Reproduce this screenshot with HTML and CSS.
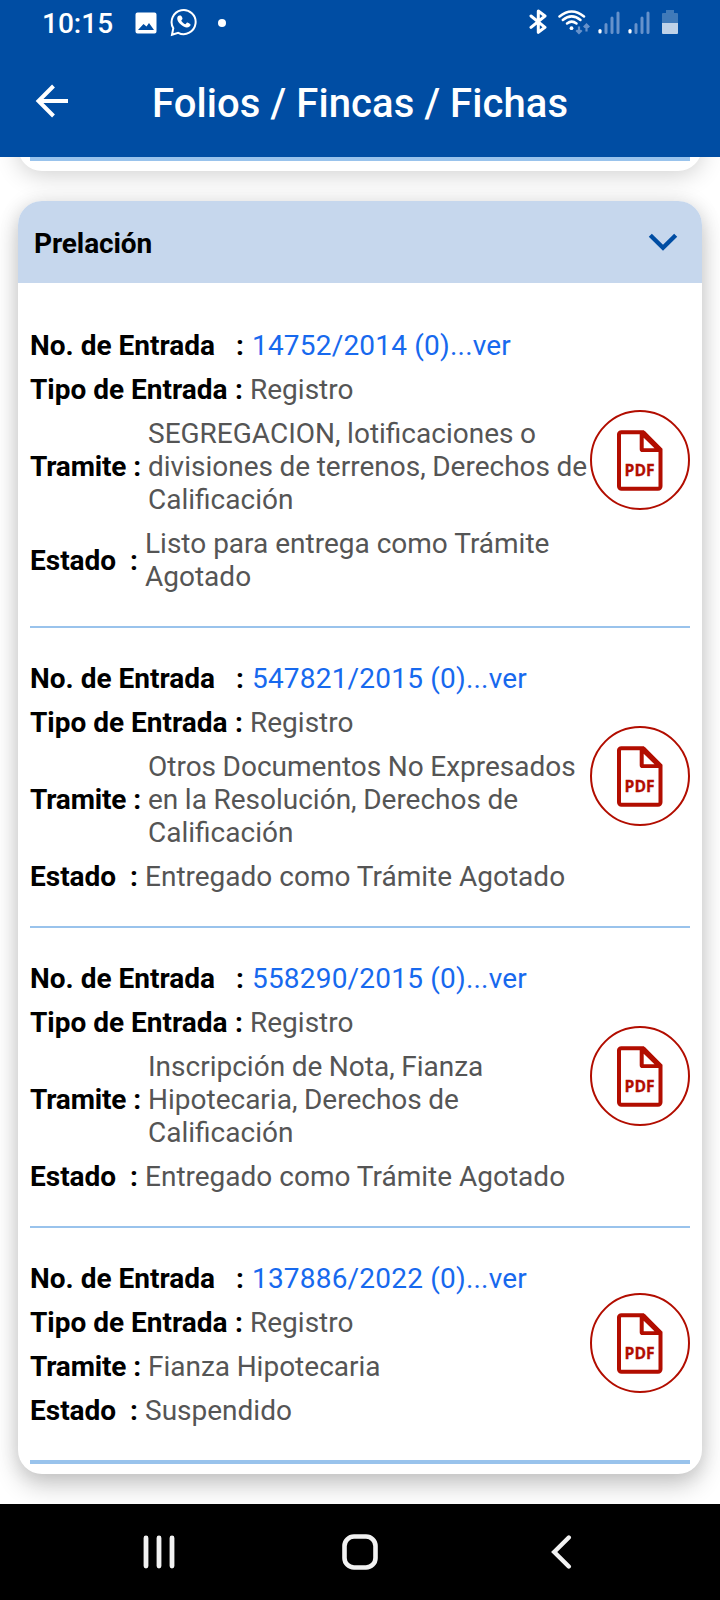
FILE: index.html
```html
<!DOCTYPE html>
<html lang="es">
<head>
<meta charset="utf-8">
<title>Folios / Fincas / Fichas</title>
<link rel="stylesheet" href="styles.css">
</head>
<body>
<svg class="defs" width="0" height="0">
  <symbol id="pdf" viewBox="0 -0.7 46 62">
    <path d="M4.500 2.500H26L43.500 19.800V56.500a2.500 2.500 0 0 1-2.500 2.500H4.500A2.500 2.500 0 0 1 2 56.500V4.500A2.500 2.500 0 0 1 4.500 2.500Z" fill="none" stroke="#b20d00" stroke-width="4"/>
    <path d="M22.700 2V19.500a2.800 2.800 0 0 0 2.800 2.800H44V18L28 1.500ZM26.700 8L37.500 18.600H26.700Z" fill="#b20d00" fill-rule="evenodd"/>
    <text class="pdf-text" x="7.600" y="46.200" textLength="30" lengthAdjust="spacingAndGlyphs">PDF</text>
  </symbol>
  <symbol id="signal" viewBox="0 0 22 24">
    <path d="M8 22.500V14.500M14 22.500V8M20 22.500V3" stroke="#6692cb" stroke-width="3" stroke-linecap="round"/>
    <path d="M2 22V20.500" stroke="#fff" stroke-width="3.200" stroke-linecap="round"/>
  </symbol>
</svg>
<div class="screen">
  <header class="top">
    <div class="status">
      <span class="clock">10:15</span>
      <svg class="i-photo" width="22" height="22" viewBox="0 0 22 22"><path fill="#fff" fill-rule="evenodd" d="M2.500 .5h17a2 2 0 0 1 2 2v17a2 2 0 0 1-2 2h-17a2 2 0 0 1-2-2v-17a2 2 0 0 1 2-2ZM3 18H19L14 11L11.500 14.500L8.500 12Z"/></svg>
      <svg class="i-chat" width="28" height="29" viewBox="0 0 28 29"><path d="M2 26.800L3.300 20.200A12 12 0 1 1 8.200 24.800Z" fill="none" stroke="#fff" stroke-width="2"/><path d="M9.300 7.600c-.8 0-2.100 1.300-2.100 3 0 3.700 5.700 8.900 9.700 8.900 2 0 3.700-1.300 3.700-2.900 0-.7-2.800-2.200-3.400-2.200-.7 0-1.300 1.800-2 1.800-.9 0-3.900-2.700-3.900-3.600 0-.5 1.200-1.200 1.200-1.900 0-.6-1.100-3.100-1.700-3.100Z" fill="#fff"/></svg>
      <span class="dot"></span>
      <div class="sys">
        <svg width="18" height="25" viewBox="0 0 18 25"><path d="M2 7L16 18.300L9.300 23.300V2L16 7L2 18.300" fill="none" stroke="#fff" stroke-width="3" stroke-linejoin="round" stroke-linecap="round"/></svg>
        <svg class="i-wifi" width="33" height="25" viewBox="0 0 33 25"><g fill="none" stroke="#fff" stroke-width="2.500" stroke-linecap="round"><path d="M2.500 6.500Q14.700-3.500 27 6.500"/><path d="M5.800 10Q14.700 2.800 23.500 10"/><path d="M10 13.500Q14.700 9.800 19.500 13.500"/></g><circle cx="14.500" cy="18.200" r="1.900" fill="#fff"/><path d="M22 16.500V22.500M19.300 20.200L22 23L24.700 20.200M29.500 21.500V14.500M26.800 17.300L29.500 14.500L32.200 17.300" fill="none" stroke="#6692cb" stroke-width="2.200"/></svg>
        <svg class="i-sig" width="22" height="24"><use href="#signal"/></svg>
        <svg class="i-sig" width="22" height="24"><use href="#signal"/></svg>
        <svg class="i-bat" width="16" height="24" viewBox="0 0 16 24"><path d="M4 0h8v3h3a1 1 0 0 1 1 1v9H0V4a1 1 0 0 1 1-1h3Z" fill="#407ab9"/><path d="M0 13H16V23a1 1 0 0 1-1 1H1a1 1 0 0 1-1-1Z" fill="#bfd2e8"/></svg>
      </div>
    </div>
    <div class="bar">
      <svg class="back" width="34" height="34" viewBox="0 0 34 34"><path d="M33 17H3M18.500 2L3.500 17L18.500 32" fill="none" stroke="#fff" stroke-width="4"/></svg>
      <h1>Folios / Fincas / Fichas</h1>
    </div>
  </header>
  <main>
    <section class="card prev"><div class="endrule"></div></section>
    <section class="card">
      <div class="head"><h2>Prelación</h2><svg width="30" height="18" viewBox="0 0 30 18"><path d="M2.300 2.300L15 14.700L27.700 2.300" fill="none" stroke="#004da3" stroke-width="4.400"/></svg></div>
      <div class="list">
        <article>
          <div class="rows">
            <div class="row"><b class="l-no">No. de Entrada<i>:</i></b><a>14752/2014 (0)...ver</a></div>
            <div class="row"><b class="l-tipo">Tipo de Entrada<i>:</i></b><span>Registro</span></div>
            <div class="row"><b class="l-tram">Tramite<i>:</i></b><span>SEGREGACION, lotificaciones o divisiones de terrenos, Derechos de Calificación</span></div>
            <div class="row"><b class="l-est">Estado<i>:</i></b><span>Listo para entrega como Trámite Agotado</span></div>
          </div>
          <div class="pdf"><svg width="46" height="62"><use href="#pdf"/></svg></div>
        </article>
        <article>
          <div class="rows">
            <div class="row"><b class="l-no">No. de Entrada<i>:</i></b><a>547821/2015 (0)...ver</a></div>
            <div class="row"><b class="l-tipo">Tipo de Entrada<i>:</i></b><span>Registro</span></div>
            <div class="row"><b class="l-tram">Tramite<i>:</i></b><span>Otros Documentos No Expresados en la Resolución, Derechos de Calificación</span></div>
            <div class="row"><b class="l-est">Estado<i>:</i></b><span>Entregado como Trámite Agotado</span></div>
          </div>
          <div class="pdf"><svg width="46" height="62"><use href="#pdf"/></svg></div>
        </article>
        <article>
          <div class="rows">
            <div class="row"><b class="l-no">No. de Entrada<i>:</i></b><a>558290/2015 (0)...ver</a></div>
            <div class="row"><b class="l-tipo">Tipo de Entrada<i>:</i></b><span>Registro</span></div>
            <div class="row"><b class="l-tram">Tramite<i>:</i></b><span>Inscripción de Nota, Fianza Hipotecaria, Derechos de Calificación</span></div>
            <div class="row"><b class="l-est">Estado<i>:</i></b><span>Entregado como Trámite Agotado</span></div>
          </div>
          <div class="pdf"><svg width="46" height="62"><use href="#pdf"/></svg></div>
        </article>
        <article>
          <div class="rows">
            <div class="row"><b class="l-no">No. de Entrada<i>:</i></b><a>137886/2022 (0)...ver</a></div>
            <div class="row"><b class="l-tipo">Tipo de Entrada<i>:</i></b><span>Registro</span></div>
            <div class="row"><b class="l-tram">Tramite<i>:</i></b><span>Fianza Hipotecaria</span></div>
            <div class="row"><b class="l-est">Estado<i>:</i></b><span>Suspendido</span></div>
          </div>
          <div class="pdf"><svg width="46" height="62"><use href="#pdf"/></svg></div>
        </article>
        <div class="endrule"></div>
      </div>
    </section>
  </main>
  <nav>
    <svg width="34" height="34" viewBox="0 0 34 34"><path d="M4 3V31M17 3V31M30 3V31" stroke="#f2f2f2" stroke-width="4.800" stroke-linecap="round"/></svg>
    <svg width="36" height="36" viewBox="0 0 36 36"><rect x="2.500" y="2.500" width="31" height="31" rx="9.500" fill="none" stroke="#f2f2f2" stroke-width="4.600"/></svg>
    <svg width="34" height="34" viewBox="0 0 34 34"><path d="M24.800 2.500L10.200 17L24.800 31.500" fill="none" stroke="#f2f2f2" stroke-width="4.400" stroke-linecap="round"/></svg>
  </nav>
</div>
</body>
</html>
```
FILE: styles.css
```css
* { box-sizing: border-box; }
body { margin: 0; font-family: Roboto, "Liberation Sans", sans-serif; font-size: 28px; line-height: 33px; background: #fff; }
svg { display: block; flex: none; }
.defs { display: none; }
.screen { width: 720px; height: 1600px; display: flex; flex-direction: column; overflow: hidden; }
.top { height: 157px; flex: none; background: #004da3; color: #fff; z-index: 1; }
.status { height: 48px; padding-left: 42px; display: flex; align-items: flex-start; }
.clock { width: 93px; padding-top: 7px; font-weight: 500; }
.i-photo { margin-top: 12px; }
.i-chat { margin: 8px 0 0 13px; }
.dot { width: 8px; height: 8px; border-radius: 50%; background: #fff; margin: 19px 0 0 20px; }
.sys { display: flex; margin: 10px 42px 0 auto; }
.sys > svg:first-child { margin-top: -1px; }
.i-wifi { margin-left: 10px; }
.i-sig { margin-left: 8px; }
.i-bat { margin-left: 12px; }
.bar { height: 109px; display: flex; align-items: flex-start; padding-left: 35px; }
.back { margin-top: 36px; }
h1 { margin: 32px 0 0 83px; font-size: 40px; line-height: 47px; font-weight: 500; letter-spacing: .09px; white-space: nowrap; }
main { flex: 1; min-height: 0; padding: 0 18px; overflow: hidden; }
.card { background: #fff; border-radius: 24px; box-shadow: 0 12px 24px rgba(0,0,0,.2), 0 0 20px rgba(0,0,0,.1); }
.prev { height: 60px; margin: -46px 0 30px; padding: 46px 12px 0; box-shadow: 0 4px 24px rgba(0,0,0,.19); }
.endrule { height: 4px; background: #99c3ec; }
.head { height: 82px; background: #c6d7ed; border-radius: 24px 24px 0 0; padding: 0 24px 0 16px; display: flex; align-items: center; justify-content: space-between; }
h2 { margin: 3px 0 0; font-size: 28px; line-height: 33px; font-weight: 700; letter-spacing: -.1px; }
.list { padding: 12px 12px 10px; }
article { display: flex; align-items: center; padding: 34px 0 33px; border-bottom: 2px solid #99c3ec; }
article:nth-last-child(2) { border-bottom: 0; }
.rows { width: 560px; display: flex; flex-direction: column; gap: 11px; }
.row { display: flex; align-items: center; }
.row b { flex: none; display: flex; justify-content: space-between; color: #000; white-space: nowrap; }
.row i { font-style: normal; }
.row span { color: #555; }
.row .l-tram + span { word-spacing: -.4px; }
.row a { color: #1769ee; letter-spacing: .2px; }
.row b { margin-right: 7px; }
.l-no { width: 214px; }
.row .l-no { margin-right: 8px; }
.l-tipo { width: 213px; }
.l-tram { width: 111px; letter-spacing: -.18px; }
.l-est { width: 108px; }
.pdf { width: 100px; height: 100px; flex: none; border: 2px solid #b20d00; border-radius: 50%; display: flex; align-items: center; justify-content: center; margin-top: -3px; }
.pdf-text { font: 700 15.500px "Open Sans", "Noto Sans", sans-serif; fill: #b20d00; stroke: #b20d00; stroke-width: .3px; }
nav { height: 96px; flex: none; background: #000; display: flex; justify-content: space-between; align-items: center; padding: 0 142px; }
```
